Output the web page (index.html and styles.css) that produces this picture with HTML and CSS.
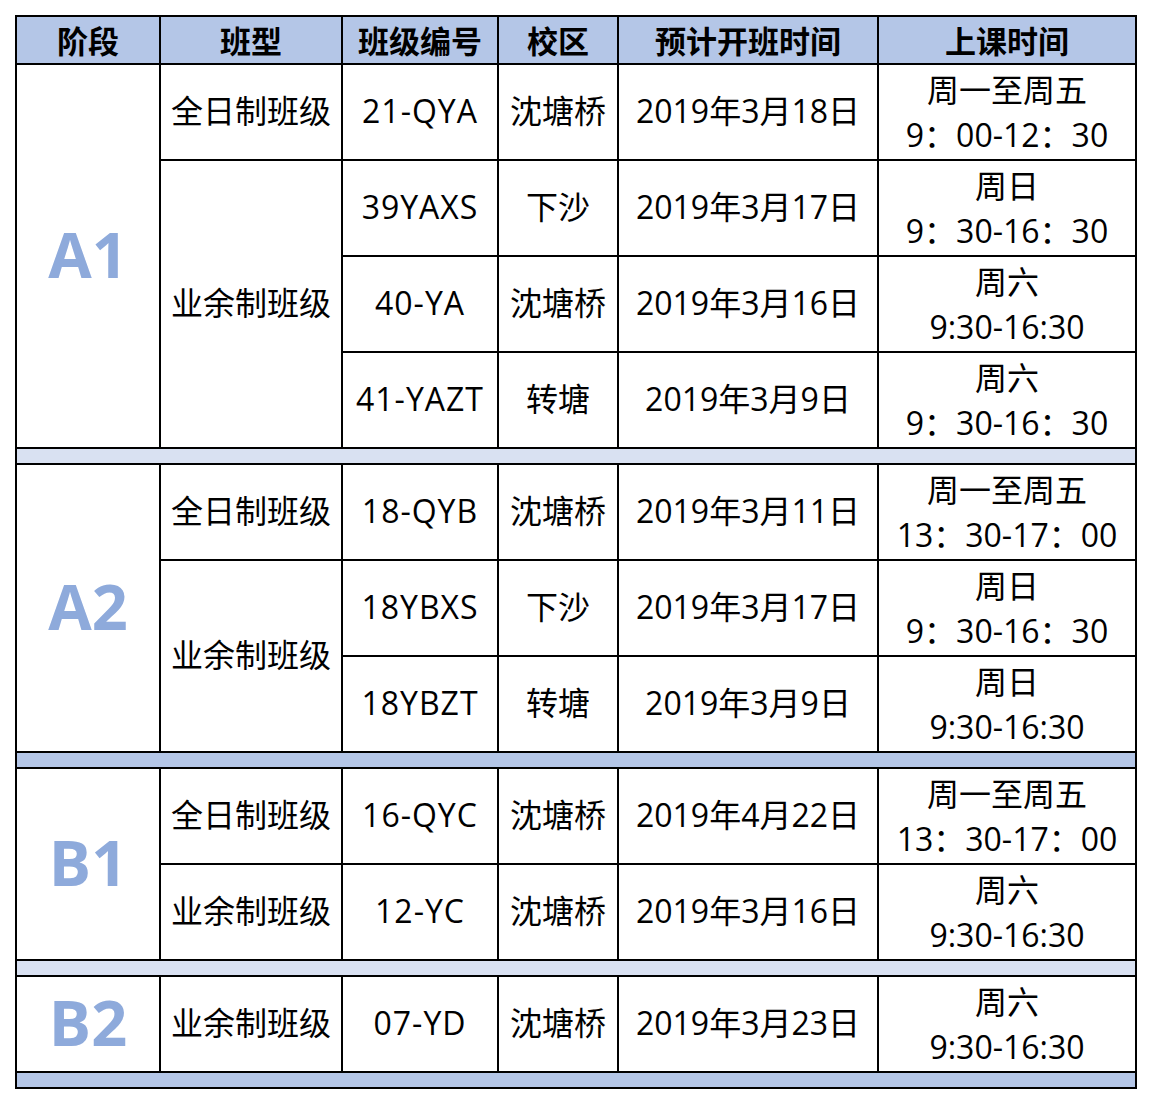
FILE: index.html
```html
<!DOCTYPE html>
<html lang="zh-CN">
<head>
<meta charset="utf-8">
<title>班级开班时间表</title>
<link rel="stylesheet" href="styles.css">
</head>
<body>
<table class="schedule">
  <colgroup>
    <col class="c-stage"><col class="c-type"><col class="c-code"><col class="c-campus"><col class="c-date"><col class="c-time">
  </colgroup>
  <thead>
    <tr class="head">
      <th>阶段</th><th>班型</th><th>班级编号</th><th>校区</th><th>预计开班时间</th><th>上课时间</th>
    </tr>
  </thead>
  <tbody>
    <tr class="row">
      <td class="stage" rowspan="4">A1</td>
      <td>全日制班级</td><td class="code">21-QYA</td><td>沈塘桥</td><td>2019年3月18日</td>
      <td class="time">周一至周五<br>9：00-12：30</td>
    </tr>
    <tr class="row">
      <td rowspan="3">业余制班级</td><td class="code">39YAXS</td><td>下沙</td><td>2019年3月17日</td>
      <td class="time">周日<br>9：30-16：30</td>
    </tr>
    <tr class="row">
      <td class="code">40-YA</td><td>沈塘桥</td><td>2019年3月16日</td>
      <td class="time">周六<br>9:30-16:30</td>
    </tr>
    <tr class="row">
      <td class="code">41-YAZT</td><td>转塘</td><td>2019年3月9日</td>
      <td class="time">周六<br>9：30-16：30</td>
    </tr>
    <tr class="sep light"><td colspan="6"></td></tr>

    <tr class="row">
      <td class="stage" rowspan="3">A2</td>
      <td>全日制班级</td><td class="code">18-QYB</td><td>沈塘桥</td><td>2019年3月11日</td>
      <td class="time">周一至周五<br>13：30-17：00</td>
    </tr>
    <tr class="row">
      <td rowspan="2">业余制班级</td><td class="code">18YBXS</td><td>下沙</td><td>2019年3月17日</td>
      <td class="time">周日<br>9：30-16：30</td>
    </tr>
    <tr class="row">
      <td class="code">18YBZT</td><td>转塘</td><td>2019年3月9日</td>
      <td class="time">周日<br>9:30-16:30</td>
    </tr>
    <tr class="sep dark"><td colspan="6"></td></tr>

    <tr class="row">
      <td class="stage" rowspan="2">B1</td>
      <td>全日制班级</td><td class="code">16-QYC</td><td>沈塘桥</td><td>2019年4月22日</td>
      <td class="time">周一至周五<br>13：30-17：00</td>
    </tr>
    <tr class="row">
      <td>业余制班级</td><td class="code">12-YC</td><td>沈塘桥</td><td>2019年3月16日</td>
      <td class="time">周六<br>9:30-16:30</td>
    </tr>
    <tr class="sep light"><td colspan="6"></td></tr>

    <tr class="row">
      <td class="stage">B2</td>
      <td>业余制班级</td><td class="code">07-YD</td><td>沈塘桥</td><td>2019年3月23日</td>
      <td class="time">周六<br>9:30-16:30</td>
    </tr>
    <tr class="sep dark"><td colspan="6"></td></tr>
  </tbody>
</table>
</body>
</html>
```

FILE: styles.css
```css
html, body {
  margin: 0;
  padding: 0;
  background: #ffffff;
}

body {
  padding: 15px 0 0 15px;
  font-family: "Open Sans", "Noto Sans CJK SC", sans-serif;
  color: #000000;
}

.schedule {
  border-collapse: collapse;
  table-layout: fixed;
  width: 1122px;
}

.c-stage { width: 144px; }
.c-type { width: 182px; }
.c-code { width: 156px; }
.c-campus { width: 120px; }
.c-date { width: 260px; }
.c-time { width: 258px; }

.schedule th,
.schedule td {
  border: 2px solid #000000;
  padding: 0 0 2px 0;
  text-align: center;
  vertical-align: middle;
  font-size: 32px;
  line-height: 44px;
  white-space: nowrap;
  overflow: hidden;
}

.head {
  height: 48px;
}

.schedule .head th {
  background: #b4c6e7;
  font-family: "Noto Sans CJK SC", sans-serif;
  font-weight: 700;
  font-size: 31px;
  line-height: 40px;
  padding: 0 0 1px 0;
}

.row {
  height: 96px;
}

.row td {
  font-family: "Open Sans", "Noto Sans CJK SC", sans-serif;
}

.schedule td.code {
  letter-spacing: 1px;
}

.schedule td.time {
  line-height: 45px;
  padding-bottom: 0;
}

.schedule td.stage {
  font-family: "Open Sans", "Noto Sans", sans-serif;
  font-weight: 700;
  font-size: 63px;
  line-height: 70px;
  color: #8eaadb;
  padding-bottom: 4px;
}

.sep {
  height: 16px;
}

.schedule .sep td {
  height: 12px;
  line-height: 0;
  font-size: 0;
  padding: 0;
}

.sep.light td {
  background: #d9e1f2;
}

.sep.dark td {
  background: #b4c6e7;
}
```
